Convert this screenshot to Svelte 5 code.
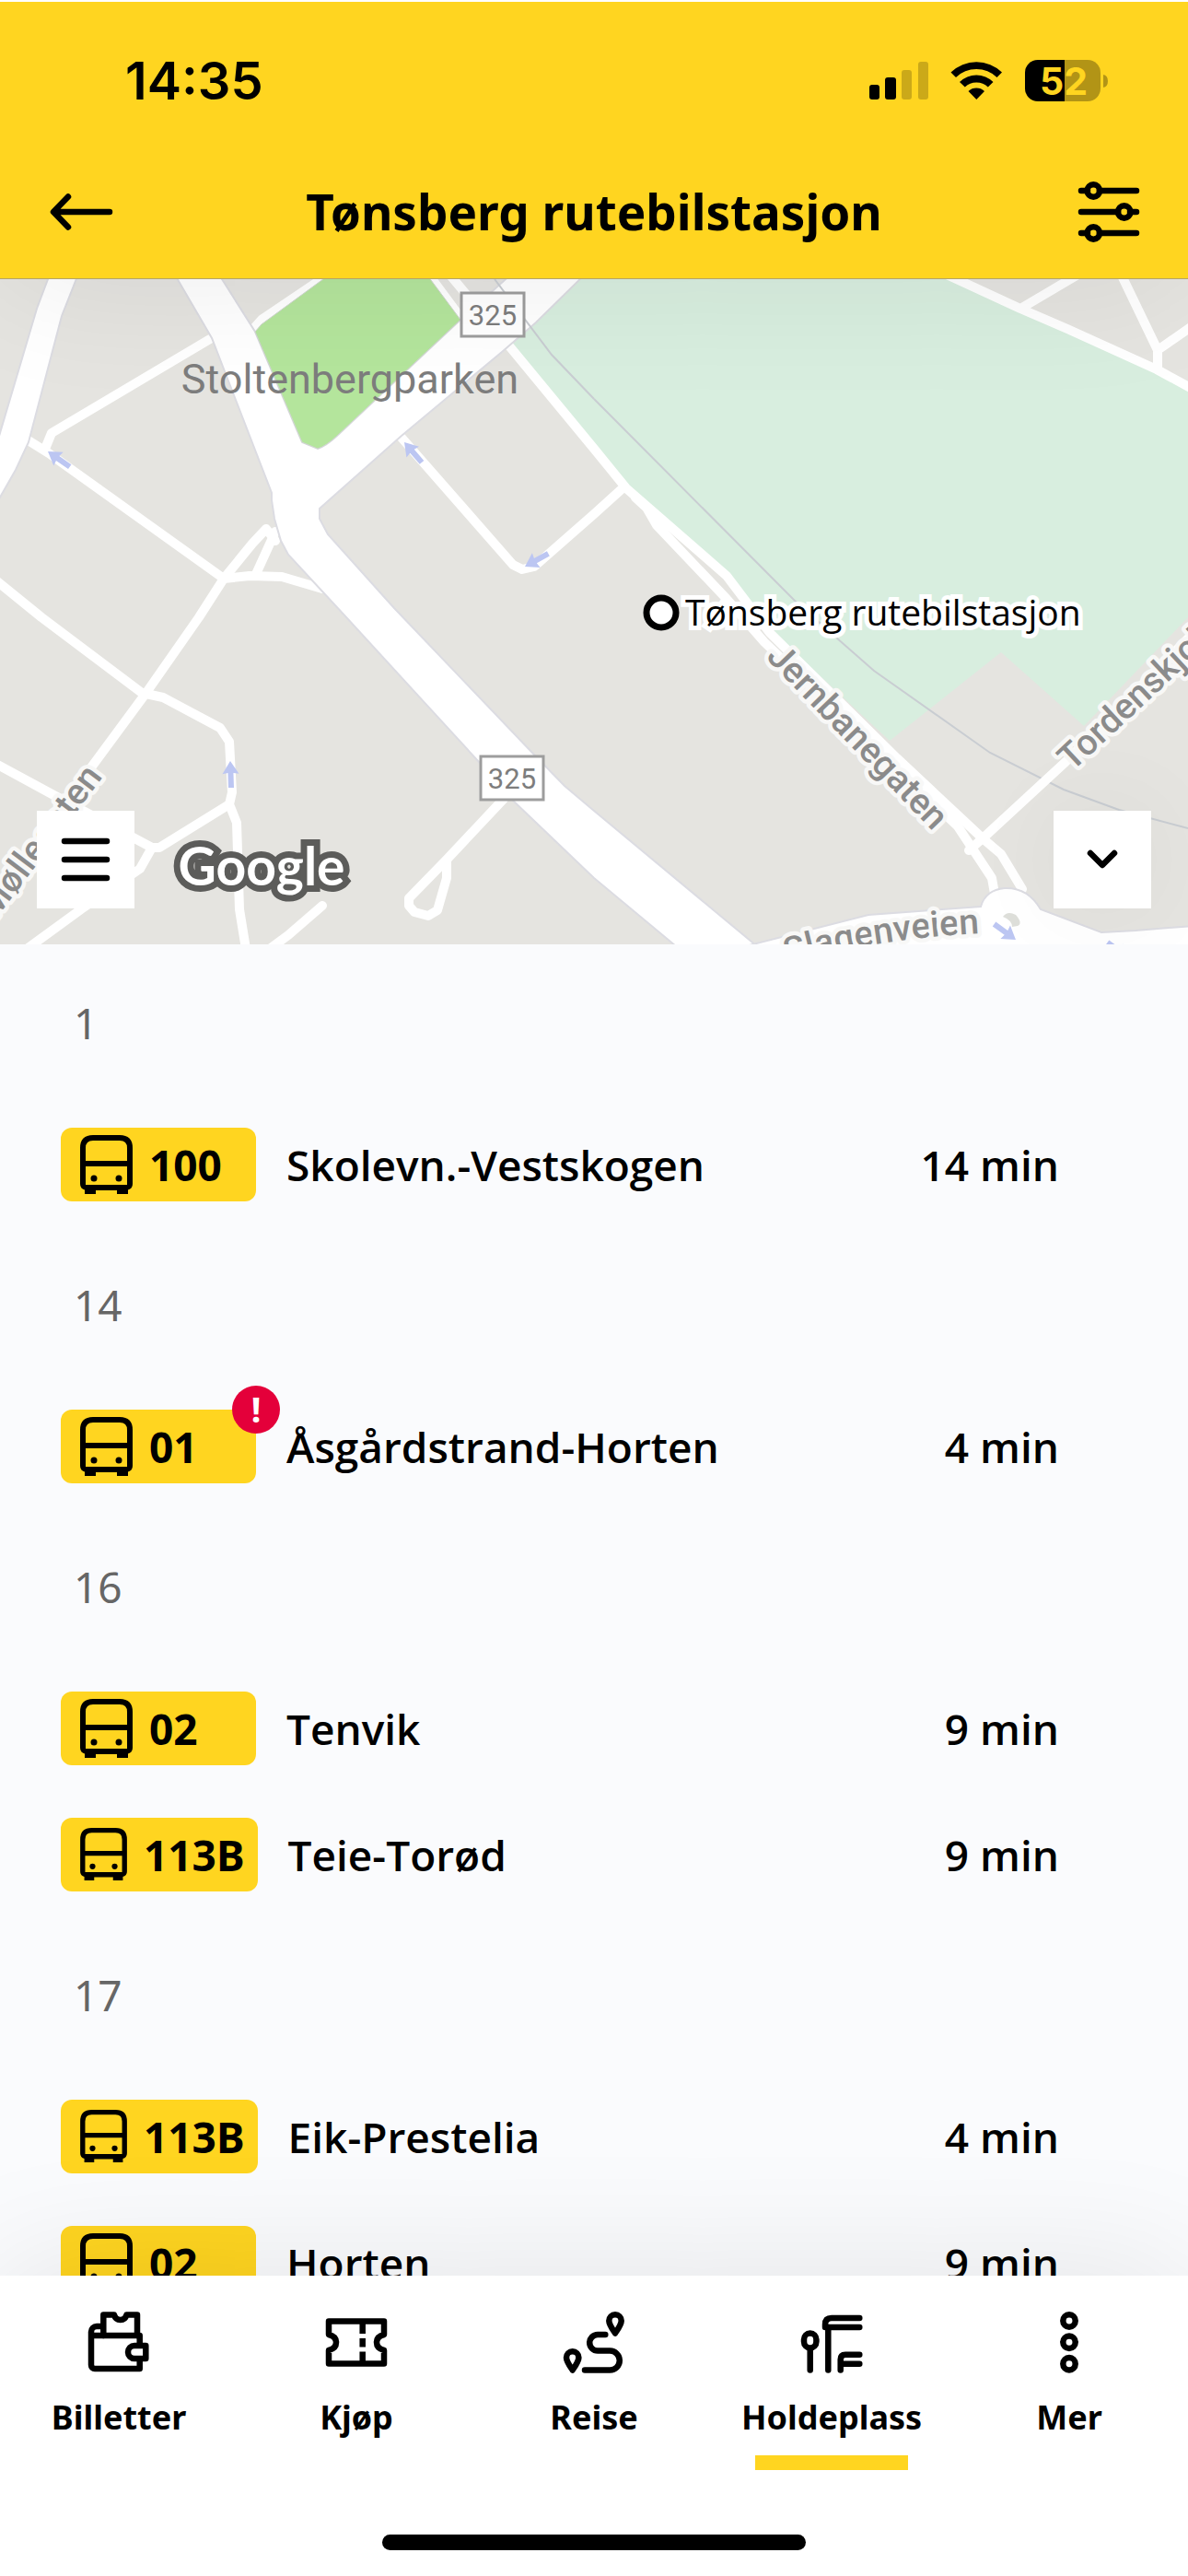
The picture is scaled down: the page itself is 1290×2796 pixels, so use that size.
<script>
	const groups = [
		{
			platform: '1',
			departures: [{ line: '100', destination: 'Skolevn.-Vestskogen', time: '14 min' }]
		},
		{
			platform: '14',
			departures: [{ line: '01', destination: 'Åsgårdstrand-Horten', time: '4 min', alert: true }]
		},
		{
			platform: '16',
			departures: [
				{ line: '02', destination: 'Tenvik', time: '9 min' },
				{ line: '113B', destination: 'Teie-Torød', time: '9 min' }
			]
		},
		{
			platform: '17',
			departures: [
				{ line: '113B', destination: 'Eik-Prestelia', time: '4 min' },
				{ line: '02', destination: 'Horten', time: '9 min' }
			]
		}
	];

	const tabs = [
		{ id: 'billetter', label: 'Billetter' },
		{ id: 'kjop', label: 'Kjøp' },
		{ id: 'reise', label: 'Reise' },
		{ id: 'holdeplass', label: 'Holdeplass' },
		{ id: 'mer', label: 'Mer' }
	];

	// one-way arrows: tip position and heading
	const arrows = [
		{ x: 52, y: 490, angle: -55 },
		{ x: 439, y: 480, angle: -41 },
		{ x: 570, y: 615, angle: -119 },
		{ x: 250, y: 826, angle: -2 },
		{ x: 1103, y: 1020, angle: 126 },
		{ x: 1226, y: 1040, angle: 126 }
	];

	const roadSigns = [
		{ x: 500, y: 317 },
		{ x: 521, y: 820 }
	];

	let active = 'holdeplass';
</script>

<div class="app">
	<header>
		<div class="status">
			<span class="clock">14:35</span>
			<svg class="status-icons" viewBox="0 0 260 48" aria-hidden="true">
				<rect x="0" y="28" width="11" height="16" rx="3" />
				<rect x="17" y="20" width="12" height="24" rx="3" />
				<g opacity="0.2">
					<rect x="35" y="12" width="11" height="32" rx="3" />
					<rect x="53" y="3" width="11" height="41" rx="3" />
				</g>
				<path d="M88.5 14.5a40 40 0 0 1 55.5 0l-5.500 5.500a32 32 0 0 0-44.500 0z" />
				<path d="M98 25a26 26 0 0 1 36.500 0l-5.700 5.500a18 18 0 0 0-25 0z" />
				<path d="M107.500 35a13 13 0 0 1 17.500 0L116.300 44z" />
				<path d="M212 1h25a14 14 0 0 1 14 14v17a14 14 0 0 1-14 14h-25z" opacity="0.3" />
				<path d="M212 1h-29a14 14 0 0 0-14 14v17a14 14 0 0 0 14 14h29z" />
				<path d="M254 17q5 1 5 7t-5 7z" opacity="0.3" />
				<text x="211" y="39" text-anchor="middle">52</text>
			</svg>
		</div>
		<div class="title-bar">
			<button class="icon-button" aria-label="Tilbake">
				<svg viewBox="0 0 80 80"><path d="M73 40H13M28 23.500L12 40l16 16.500" /></svg>
			</button>
			<h1>Tønsberg rutebilstasjon</h1>
			<button class="icon-button" aria-label="Filter">
				<svg viewBox="0 0 80 80">
					<path d="M10 17h7M30 17h40M10 40h40M63 40h7M10 63h7M30 63h40" />
					<circle cx="23.300" cy="17" r="6.700" />
					<circle cx="56.700" cy="40" r="6.700" />
					<circle cx="23.300" cy="63" r="6.700" />
				</svg>
			</button>
		</div>
	</header>

	<section class="map">
		<svg class="map-canvas" viewBox="0 303 1290 722" preserveAspectRatio="xMidYMid slice">
			<rect x="0" y="303" width="1290" height="722" fill="#e5e4e0" />
			<path
				class="field"
				d="M629 303L555 375L645 485L680 530L793 627L851 697L966 804L1087 708L1177 788L1290 670V425L1252 403L1159 360L1106 338L1028 303Z"
			/>

			<path
				class="rail"
				d="M645 433L863 652L908 692L949 728L1075 817L1155 857L1215 879L1290 899"
			/>

			<g class="streets">
				<path d="M228 368L56 470L49 487M29 477L53 492L243 628L271 625L306 626L350 639" />
				<path d="M299 577L278 623M299 587L289 574L274 590L243 628L216 670L158 753L99 833L-10 990" />
				<path
					d="M-8 627L45 670L154 752L177 757L239 790L249 805L252 860L249 873L257 893L260 987L267 1030"
				/>
				<path d="M249 873L173 920H165L62 865L-8 827M165 920L152 943L88 987L29 1030" />
				<path d="M350 983L313 1015L290 1032" />
				<path d="M547 867L485 933L444 975V983L450 990L465 994L475 988L485 953V933" />
				<path d="M436 475L557 613L567 618L580 615L645 558L676 530" />
				<path d="M276 356L284 347L352 301M467 300L504 350" />
				<path d="M490 300L555 378L645 487L680 530L789 625L836 687L974 823L1067 910L1087 927L1110 965" />
				<path d="M690 540L702 551L713 570L789 650L830 697L1040 897L1077 953L1080 970" />
				<path d="M1052 923L1067 910L1157 827L1300 683" />
				<path d="M1030 299L1108 335L1159 357L1256 401L1300 425M1108 335L1169 299" />
				<path d="M1218 299L1257 380V401M1257 380L1296 353" />
			</g>

			<path
				class="main-road"
				d="M55 295L40 335L-3 480V545L17 510L31 480L67 343L86 295Z"
			/>
			<path
				class="main-road"
				d="M188 295L230 367L295 535V543L298 563L305 587L313 602L376 670L520 827L555 867L645 953L740 1032H828L645 880L613 853L578 817L428 660L356 580L347 563V552L436 473L545 382L582 350L638 295H558L500 347L366 473Q354 484 345 487L328 480L277 360L236 295Z"
			/>
			<path
				class="park"
				d="M355 300H465L500 347L366 473Q354 484 345 487L328 480L277 360L284 352Z"
			/>
			<path
				class="main-road"
				d="M790 1032L943 993L1065 984Q1070 966 1091 964Q1116 963 1130 987L1196 1012L1233 1010L1295 1005V1032Z"
			/>
			<path d="M1089 995Q1094 988 1103 993Q1111 1002 1105 1005L1099 1006Q1099 999 1089 995Z" fill="#dedfda" />
			<path class="rail" d="M537 303L599 385L645 433" />

			{#each arrows as arrow}
				<path
					class="arrow"
					d="M0 0L9 14L3 13V29H-3V13L-9 14Z"
					transform="translate({arrow.x} {arrow.y}) rotate({arrow.angle})"
				/>
			{/each}

			{#each roadSigns as sign}
				<g transform="translate({sign.x} {sign.y})">
					<rect class="sign" x="1" y="1" width="68" height="47" />
					<text class="sign-text" x="35" y="36">325</text>
				</g>
			{/each}

			<g class="street-names">
				<text transform="translate(922 808) rotate(46)" text-anchor="middle">Jernbanegaten</text>
				<text transform="translate(1164 838) rotate(-43)">Tordenskjolds</text>
				<text transform="translate(112 843) rotate(-53)" text-anchor="end">Møllegaten</text>
				<path id="slagenveien" d="M845 1049Q940 1020 1064 1013" fill="none" stroke="none" />
				<text text-anchor="end"><textPath href="#slagenveien" startOffset="100%">Slagenveien</textPath></text>
			</g>

			<text class="park-name" x="380" y="427">Stoltenbergparken</text>
			<circle class="stop" cx="718" cy="665" r="16" />
			<text class="stop-name" x="744" y="679">Tønsberg rutebilstasjon</text>
			<text class="brand" x="284" y="961">Google</text>
		</svg>

		<button class="map-button menu" aria-label="Meny">
			<svg viewBox="0 0 80 80"><path d="M17 20H63M17 40H63M17 60H63" /></svg>
		</button>
		<button class="map-button collapse" aria-label="Skjul kart">
			<svg viewBox="0 0 80 80"><path d="M27 33L40 46L53 33" /></svg>
		</button>
	</section>

	<main>
		{#each groups as group}
			<h2>{group.platform}</h2>
			<ul>
				{#each group.departures as departure}
					<li>
						<button class="departure">
							<span class="badge">
								<svg class:small={departure.line.length > 3} viewBox="0 0 57 64" aria-hidden="true">
									<path
										d="M5 64V59.500Q0 58 0 53V14Q0 0 14 0H43Q57 0 57 14V53Q57 58 52 59.500V64H40V60H17V64ZM6 28H51V14Q51 6 43 6H14Q6 6 6 14ZM6 34V54H51V34Z"
										fill-rule="evenodd"
									/>
									<circle cx="15" cy="47" r="3.500" />
									<circle cx="42" cy="47" r="3.500" />
								</svg>
								<span>{departure.line}</span>
								{#if departure.alert}
									<span class="alert">!</span>
								{/if}
							</span>
							<span class="destination">{departure.destination}</span>
							<span class="time">{departure.time}</span>
						</button>
					</li>
				{/each}
			</ul>
		{/each}
	</main>

	<footer>
		<nav>
			{#each tabs as tab}
				<button class="tab" class:active={active === tab.id} on:click={() => (active = tab.id)}>
					<svg viewBox="0 0 80 80" aria-hidden="true">
						{#if tab.id === 'billetter'}
							<path d="M21 23h-5a6 6 0 0 0-6 6v36a4 4 0 0 0 4 4h48.700V60M10 33h52.700V43" />
							<path d="M23.300 33V10.500H35c1 4 4 5.500 6.700 5.500s5.700-1.500 6.700-5.500H60V33" />
							<path d="M69.300 44H57a7 7 0 0 0 0 14h12.300z" />
						{:else if tab.id === 'kjop'}
							<path d="M10 17.500h60V32q-8 2-8 8.500t8 8.500v14.500H10V49q8-2 8-8.500T10 32z" />
							<path class="butt" d="M46.700 20v11M46.700 36v9.500M46.700 50.500V62" />
						{:else if tab.id === 'reise'}
							<path d="M63 30.500c-3-4.500-6.700-9.500-6.700-13.500a6.700 6.700 0 0 1 13.400 0c0 4-3.700 9-6.700 13.500z" />
							<path d="M16.700 70.500c-3-4.500-6.700-9.500-6.700-13.500a6.700 6.700 0 0 1 13.400 0c0 4-3.700 9-6.700 13.500z" />
							<path d="M52.300 32H44a8.800 8.800 0 0 0 0 17.600h13.300a10.500 10.500 0 0 1 0 21H30" />
						{:else if tab.id === 'holdeplass'}
							<rect x="10" y="30.500" width="13.400" height="16" rx="6.700" />
							<path d="M16.700 48v22.500M36.300 24v46.500" />
							<path d="M70.300 14H40q-7 0-7 7v3h37.300" />
							<path d="M70.300 53.700H55q-5.300 0-5.300 5.300v11.500M50 63.700h20.300" />
						{:else}
							<circle cx="40" cy="17" r="6.700" />
							<circle cx="40" cy="40.300" r="6.700" />
							<circle cx="40" cy="63.700" r="6.700" />
						{/if}
					</svg>
					<span>{tab.label}</span>
				</button>
			{/each}
		</nav>
		<div class="home-indicator"></div>
	</footer>
</div>

<style>
	:global(body) {
		background: #fafbfd;
	}

	.app {
		display: flex;
		flex-direction: column;
		height: 100vh;
		overflow: hidden;
		background: #fafbfd;
		color: #000;
		font-family: 'Noto Sans', 'Open Sans', sans-serif;
	}

	button {
		margin: 0;
		padding: 0;
		border: none;
		background: none;
		color: inherit;
		font: inherit;
		cursor: pointer;
	}

	header {
		position: relative;
		z-index: 2;
		flex: none;
		padding-bottom: 16px;
		border-top: 2px solid #fff;
		border-bottom: 1px solid #b5a467;
		background: #ffd520;
		box-shadow: 0 0 150px rgba(0, 0, 0, 0.08);
	}

	.status {
		display: flex;
		align-items: center;
		justify-content: space-between;
		height: 172px;
		padding: 0 86px 0 136px;
	}

	.clock {
		font-family: Inter, sans-serif;
		font-size: 56px;
		font-weight: 600;
	}

	.status-icons {
		width: 260px;
		height: 48px;
	}

	.status-icons text {
		fill: #ffd520;
		font-family: Inter, sans-serif;
		font-size: 41px;
		font-weight: 700;
	}

	.title-bar {
		display: flex;
		align-items: center;
		justify-content: space-between;
		height: 112px;
		padding: 0 46px;
	}

	h1 {
		margin: 0;
		padding-bottom: 2px;
		font-size: 53px;
		font-weight: 700;
	}

	.icon-button svg,
	.tab svg,
	.map-button svg {
		display: block;
		width: 80px;
		height: 80px;
		fill: none;
		stroke: #000;
		stroke-width: 6.5;
		stroke-linecap: round;
		stroke-linejoin: round;
	}

	.map {
		position: relative;
		flex: none;
		height: 722px;
	}

	.map-canvas {
		display: block;
		width: 100%;
		height: 100%;
		font-family: Roboto, sans-serif;
	}

	.field {
		fill: #d8eedf;
	}

	.park {
		fill: #b4e59c;
		stroke: #d0d6cf;
	}

	.rail {
		fill: none;
		stroke: #c9cdd2;
		stroke-width: 2;
	}

	.streets {
		fill: none;
		stroke: #fff;
		stroke-width: 10;
		stroke-linecap: round;
		stroke-linejoin: round;
	}

	.main-road {
		fill: #fff;
		stroke: #dcdce2;
		stroke-width: 2;
	}

	.arrow {
		fill: #bcc6f2;
	}

	.sign {
		fill: #fff;
		stroke: #9d9d9d;
		stroke-width: 3;
	}

	.sign-text {
		fill: #7d7d7d;
		font-size: 31px;
		text-anchor: middle;
	}

	.street-names {
		fill: #8b8b8b;
		stroke: #f8f8f7;
		stroke-width: 9;
		stroke-linejoin: round;
		paint-order: stroke;
		font-size: 39px;
		font-weight: 500;
	}

	.park-name {
		fill: #7d7d7d;
		font-size: 45px;
		text-anchor: middle;
	}

	.stop {
		fill: #fff;
		stroke: #000;
		stroke-width: 7;
	}

	.stop-name {
		fill: #000;
		stroke: #fff;
		stroke-width: 10;
		paint-order: stroke;
		font-family: 'Open Sans', sans-serif;
		font-size: 39px;
	}

	.brand {
		fill: #fff;
		stroke: #5c5c5a;
		stroke-width: 14;
		paint-order: stroke;
		font-family: Lato, sans-serif;
		font-size: 57px;
		font-weight: 700;
		text-anchor: middle;
	}

	.map-button {
		position: absolute;
		bottom: 39px;
		padding: 13px;
		background: #fff;
	}

	.map-button.menu {
		left: 40px;
	}

	.map-button.collapse {
		right: 40px;
		box-shadow: 0 0 110px rgba(0, 0, 0, 0.05);
	}

	main {
		position: relative;
		z-index: 1;
		flex: 1;
		min-height: 0;
		padding-top: 1px;
		overflow: hidden;
		background: #fafbfd;
	}

	h2 {
		height: 169px;
		margin: 0;
		padding: 51px 80px 0;
		box-sizing: border-box;
		color: #666;
		font-size: 46px;
		font-weight: 400;
		line-height: 66px;
	}

	ul {
		margin: 0;
		padding: 0;
		list-style: none;
	}

	.departure {
		display: flex;
		align-items: center;
		gap: 33px;
		width: 100%;
		height: 137px;
		padding: 0 140px 0 66px;
		font-family: 'Open Sans', 'Noto Sans', sans-serif;
		font-size: 46px;
		font-weight: 600;
		text-align: left;
	}

	.badge {
		position: relative;
		display: flex;
		align-items: center;
		gap: 18px;
		box-sizing: border-box;
		min-width: 212px;
		height: 80px;
		padding: 0 14px 0 21px;
		border-radius: 12px;
		background: #ffd520;
		font-family: 'Noto Sans', 'Open Sans', sans-serif;
		font-weight: 700;
	}

	.badge svg {
		width: 57px;
		height: 64px;
	}

	.badge svg.small {
		width: 51px;
		height: 57px;
	}

	.alert {
		position: absolute;
		top: -26px;
		right: -26px;
		width: 52px;
		height: 52px;
		border-radius: 50%;
		background: #e4003a;
		color: #fff;
		font-size: 38px;
		line-height: 50px;
		text-align: center;
	}

	.destination {
		flex: 1;
	}

	footer {
		position: relative;
		z-index: 1;
		flex: none;
		padding-bottom: 28px;
		background: #fff;
		box-shadow: 0 0 150px rgba(0, 0, 0, 0.1);
	}

	nav {
		display: grid;
		grid-template-columns: repeat(5, 1fr);
	}

	.tab {
		display: flex;
		flex-direction: column;
		align-items: center;
		padding-top: 32px;
		font-size: 36px;
		font-weight: 700;
		line-height: 50px;
	}

	.tab span {
		margin-top: 17px;
	}

	.tab .butt {
		stroke-linecap: butt;
	}

	.tab::after {
		content: '';
		width: 166px;
		height: 16px;
		margin-top: 16px;
	}

	.tab.active::after {
		background: #ffd520;
	}

	.home-indicator {
		width: 460px;
		height: 17px;
		margin: 70px auto 0;
		border-radius: 9px;
		background: #000;
	}
</style>
